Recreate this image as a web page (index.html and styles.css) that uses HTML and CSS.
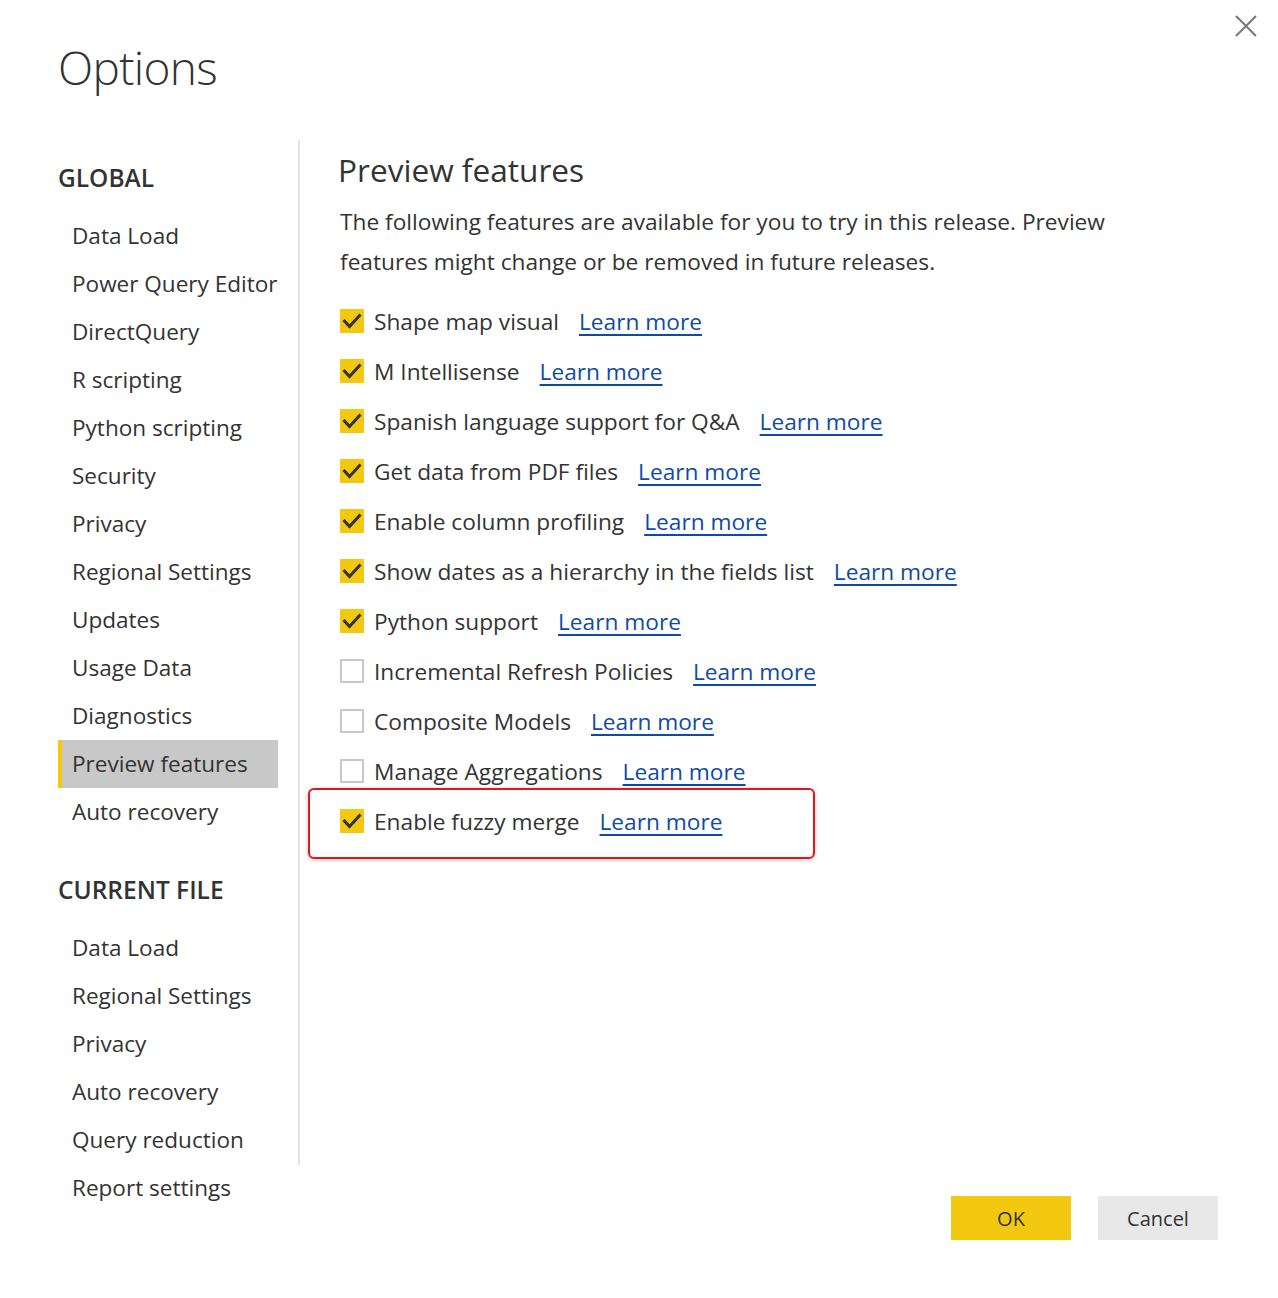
FILE: index.html
```html
<!DOCTYPE html>
<html lang="en">
<head>
<meta charset="utf-8">
<title>Options</title>
<link rel="stylesheet" href="styles.css">
</head>
<body>
<div class="dialog">
  <button class="close" aria-label="Close">
    <svg width="22" height="22" viewBox="0 0 22 22"><path d="M1 1 L21 21 M21 1 L1 21" stroke="#777" stroke-width="2" fill="none"/></svg>
  </button>
  <header class="header"><h1 class="title">Options</h1></header>
  <div class="main">
    <nav class="sidebar">
      <div class="section">GLOBAL</div>
      <ul class="nav">
        <li class="nav-item">Data Load</li>
        <li class="nav-item">Power Query Editor</li>
        <li class="nav-item">DirectQuery</li>
        <li class="nav-item">R scripting</li>
        <li class="nav-item">Python scripting</li>
        <li class="nav-item">Security</li>
        <li class="nav-item">Privacy</li>
        <li class="nav-item">Regional Settings</li>
        <li class="nav-item">Updates</li>
        <li class="nav-item">Usage Data</li>
        <li class="nav-item">Diagnostics</li>
        <li class="nav-item active">Preview features</li>
        <li class="nav-item">Auto recovery</li>
      </ul>
      <div class="section section-2">CURRENT FILE</div>
      <ul class="nav">
        <li class="nav-item">Data Load</li>
        <li class="nav-item">Regional Settings</li>
        <li class="nav-item">Privacy</li>
        <li class="nav-item">Auto recovery</li>
        <li class="nav-item">Query reduction</li>
        <li class="nav-item">Report settings</li>
      </ul>
    </nav>
    <section class="content">
      <h2 class="heading">Preview features</h2>
      <p class="desc">The following features are available for you to try in this release. Preview<br>features might change or be removed in future releases.</p>
      <ul class="features">
        <li class="feature"><span class="cb on"><svg viewBox="0 0 24 24"><path d="M4.5 12 L9.5 17.5 L19.5 6.5"/></svg></span><span class="label">Shape map visual</span><a class="link" href="#">Learn more</a></li>
        <li class="feature"><span class="cb on"><svg viewBox="0 0 24 24"><path d="M4.5 12 L9.5 17.5 L19.5 6.5"/></svg></span><span class="label">M Intellisense</span><a class="link" href="#">Learn more</a></li>
        <li class="feature"><span class="cb on"><svg viewBox="0 0 24 24"><path d="M4.5 12 L9.5 17.5 L19.5 6.5"/></svg></span><span class="label">Spanish language support for Q&amp;A</span><a class="link" href="#">Learn more</a></li>
        <li class="feature"><span class="cb on"><svg viewBox="0 0 24 24"><path d="M4.5 12 L9.5 17.5 L19.5 6.5"/></svg></span><span class="label">Get data from PDF files</span><a class="link" href="#">Learn more</a></li>
        <li class="feature"><span class="cb on"><svg viewBox="0 0 24 24"><path d="M4.5 12 L9.5 17.5 L19.5 6.5"/></svg></span><span class="label">Enable column profiling</span><a class="link" href="#">Learn more</a></li>
        <li class="feature"><span class="cb on"><svg viewBox="0 0 24 24"><path d="M4.5 12 L9.5 17.5 L19.5 6.5"/></svg></span><span class="label">Show dates as a hierarchy in the fields list</span><a class="link" href="#">Learn more</a></li>
        <li class="feature"><span class="cb on"><svg viewBox="0 0 24 24"><path d="M4.5 12 L9.5 17.5 L19.5 6.5"/></svg></span><span class="label">Python support</span><a class="link" href="#">Learn more</a></li>
        <li class="feature"><span class="cb"></span><span class="label">Incremental Refresh Policies</span><a class="link" href="#">Learn more</a></li>
        <li class="feature"><span class="cb"></span><span class="label">Composite Models</span><a class="link" href="#">Learn more</a></li>
        <li class="feature"><span class="cb"></span><span class="label">Manage Aggregations</span><a class="link" href="#">Learn more</a></li>
        <li class="feature highlighted"><span class="cb on"><svg viewBox="0 0 24 24"><path d="M4.5 12 L9.5 17.5 L19.5 6.5"/></svg></span><span class="label">Enable fuzzy merge</span><a class="link" href="#">Learn more</a><span class="redbox"></span></li>
      </ul>
    </section>
  </div>
  <footer class="footer">
    <button class="btn btn-ok">OK</button>
    <button class="btn btn-cancel">Cancel</button>
  </footer>
</div>
</body>
</html>
```
FILE: styles.css
```css
* { box-sizing: border-box; }
html, body { margin: 0; padding: 0; background: #fff; }
body {
  width: 1278px;
  height: 1298px;
  overflow: hidden;
  font-family: "Open Sans", "Noto Sans", sans-serif;
  color: #333;
}
.dialog {
  position: relative;
  width: 1278px;
  height: 1298px;
  padding: 0 60px 0 58px;
}
.close {
  position: absolute;
  top: 15px;
  right: 21px;
  width: 22px;
  height: 22px;
  padding: 0;
  border: 0;
  background: none;
  display: flex;
}
.header {
  height: 140px;
  padding-top: 37px;
}
.title {
  margin: 0;
  font-weight: 300;
  font-size: 46px;
  letter-spacing: -0.7px;
  line-height: 60px;
  color: #333;
}
.main {
  display: flex;
  height: 1025px;
}
.sidebar {
  width: 242px;
  flex: none;
  border-right: 2px solid #e3e3e3;
  padding-top: 22px;
  padding-right: 20px;
  overflow: visible;
  height: 1025px;
}
.section {
  font-size: 24.5px;
  font-weight: 600;
  line-height: 32px;
  margin-bottom: 18px;
  color: #333;
}
.section-2 { margin-top: 38px; }
.nav { list-style: none; margin: 0; padding: 0; }
.nav-item {
  height: 48px;
  line-height: 47px;
  font-size: 22.55px;
  padding-left: 14px;
  white-space: nowrap;
  color: #333;
}
.nav-item.active {
  background: #c8c8c8;
  border-left: 4px solid #f2c811;
  padding-left: 10px;
}
.content {
  flex: 1;
  padding: 10px 0 0 38px;
}
.heading {
  margin: 0;
  font-size: 31.6px;
  font-weight: 400;
  line-height: 40px;
  color: #333;
}
.desc {
  margin: 12px 0 14px 2px;
  font-size: 22.7px;
  line-height: 40px;
  color: #333;
}
.features { list-style: none; margin: 0; padding: 0 0 0 2px; }
.feature {
  position: relative;
  height: 50px;
  display: flex;
  align-items: center;
  font-size: 22.7px;
}
.cb {
  width: 24px;
  height: 24px;
  flex: none;
  border: 2px solid #c8c8c8;
  background: #fff;
  margin-right: 10px;
  display: flex;
}
.cb.on {
  background: #f2c811;
  border: 0;
}
.cb svg { width: 24px; height: 24px; }
.cb svg path { fill: none; stroke: #333; stroke-width: 3; stroke-linecap: square; }
.label { white-space: nowrap; }
.link {
  margin-left: 20px;
  color: #0f4aa6;
  text-decoration: underline;
  text-underline-offset: 4px;
  text-decoration-thickness: 2px;
  white-space: nowrap;
}
.redbox {
  position: absolute;
  left: -32px;
  top: -8px;
  width: 507px;
  height: 71px;
  border: 2px solid #e8141b;
  border-radius: 6px;
  box-shadow: 0 1px 4px rgba(0,0,0,0.25);
  pointer-events: none;
}
.footer {
  display: flex;
  justify-content: flex-end;
  gap: 27px;
  margin-top: 31px;
}
.btn {
  width: 120px;
  height: 44px;
  border: 0;
  font-family: inherit;
  font-size: 20px;
  color: #333;
  padding: 0;
}
.btn-ok { background: #f2c811; }
.btn-cancel { background: #e8e8e8; }
```
